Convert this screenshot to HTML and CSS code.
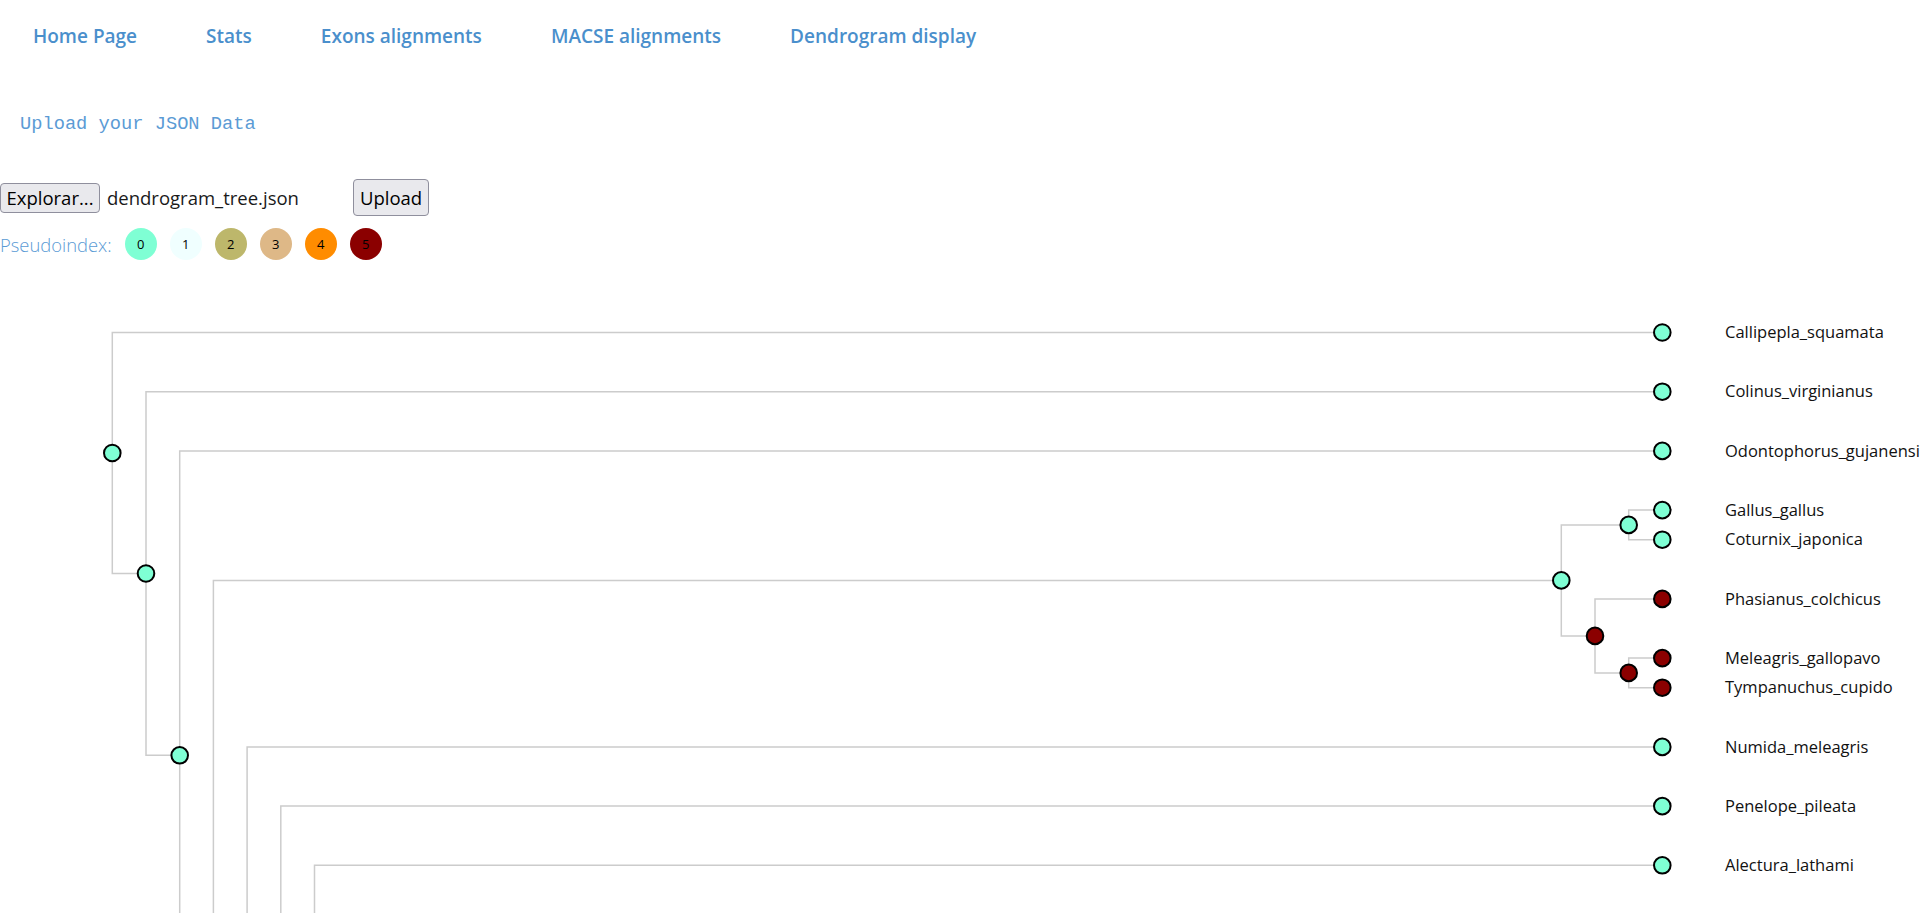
FILE: index.html
```html
<!DOCTYPE html>
<html lang="en">
<head>
<meta charset="utf-8">
<title>Dendrogram display</title>
<link rel="stylesheet" href="styles.css">
</head>
<body>
<nav class="nav">
  <a class="nav-link" href="#">Home Page</a>
  <a class="nav-link" href="#">Stats</a>
  <a class="nav-link" href="#">Exons alignments</a>
  <a class="nav-link" href="#">MACSE alignments</a>
  <a class="nav-link" href="#">Dendrogram display</a>
</nav>

<h3 class="upload-title">Upload your JSON Data</h3>

<form class="upload-form">
  <div class="file-input">
    <button type="button" class="btn btn-browse">Explorar...</button>
    <span class="file-name">dendrogram_tree.json</span>
  </div>
  <button type="button" class="btn btn-upload">Upload</button>
</form>

<div class="legend">
  <span class="legend-label">Pseudoindex:</span>
  <span class="dot dot-0">0</span>
  <span class="dot dot-1">1</span>
  <span class="dot dot-2">2</span>
  <span class="dot dot-3">3</span>
  <span class="dot dot-4">4</span>
  <span class="dot dot-5">5</span>
</div>

<svg class="tree" width="1920" height="653" viewBox="0 0 1920 653">
  <g class="links">
    <path d="M112.3,193 V72.5 H1662.3"/>
    <path d="M112.3,193 V313.5 H146"/>
    <path d="M146,313.5 V131.7 H1662.3"/>
    <path d="M146,313.5 V495.3 H179.7"/>
    <path d="M179.7,495.3 V190.9 H1662.3"/>
    <path d="M179.7,495.3 V800 H213.4"/>
    <path d="M213.4,800 V320.4 H1561.3"/>
    <path d="M247.1,1000 V486.9 H1662.3"/>
    <path d="M280.8,1000 V546.1 H1662.3"/>
    <path d="M314.5,1000 V605.3 H1662.3"/>
    <path d="M1561.3,320.4 V264.9 H1628.7"/>
    <path d="M1561.3,320.4 V375.9 H1595"/>
    <path d="M1628.7,264.9 V250.1 H1662.3"/>
    <path d="M1628.7,264.9 V279.7 H1662.3"/>
    <path d="M1595,375.9 V338.9 H1662.3"/>
    <path d="M1595,375.9 V412.9 H1628.7"/>
    <path d="M1628.7,412.9 V398.1 H1662.3"/>
    <path d="M1628.7,412.9 V427.7 H1662.3"/>
  </g>
  <g class="nodes">
    <circle class="n0" cx="112.3" cy="193" r="8.3"/>
    <circle class="n0" cx="146" cy="313.5" r="8.3"/>
    <circle class="n0" cx="179.7" cy="495.3" r="8.3"/>
    <circle class="n0" cx="1561.3" cy="320.4" r="8.3"/>
    <circle class="n0" cx="1628.7" cy="264.9" r="8.3"/>
    <circle class="n5" cx="1595" cy="375.9" r="8.3"/>
    <circle class="n5" cx="1628.7" cy="412.9" r="8.3"/>

    <circle class="n0" cx="1662.3" cy="72.5" r="8.3"/>
    <circle class="n0" cx="1662.3" cy="131.7" r="8.3"/>
    <circle class="n0" cx="1662.3" cy="190.9" r="8.3"/>
    <circle class="n0" cx="1662.3" cy="250.1" r="8.3"/>
    <circle class="n0" cx="1662.3" cy="279.7" r="8.3"/>
    <circle class="n5" cx="1662.3" cy="338.9" r="8.3"/>
    <circle class="n5" cx="1662.3" cy="398.1" r="8.3"/>
    <circle class="n5" cx="1662.3" cy="427.7" r="8.3"/>
    <circle class="n0" cx="1662.3" cy="486.9" r="8.3"/>
    <circle class="n0" cx="1662.3" cy="546.1" r="8.3"/>
    <circle class="n0" cx="1662.3" cy="605.3" r="8.3"/>
  </g>
  <g class="labels">
    <text x="1725" y="72.5" dy=".35em">Callipepla_squamata</text>
    <text x="1725" y="131.7" dy=".35em">Colinus_virginianus</text>
    <text x="1725" y="190.9" dy=".35em">Odontophorus_gujanensis</text>
    <text x="1725" y="250.1" dy=".35em">Gallus_gallus</text>
    <text x="1725" y="279.7" dy=".35em">Coturnix_japonica</text>
    <text x="1725" y="338.9" dy=".35em">Phasianus_colchicus</text>
    <text x="1725" y="398.1" dy=".35em">Meleagris_gallopavo</text>
    <text x="1725" y="427.7" dy=".35em">Tympanuchus_cupido</text>
    <text x="1725" y="486.9" dy=".35em">Numida_meleagris</text>
    <text x="1725" y="546.1" dy=".35em">Penelope_pileata</text>
    <text x="1725" y="605.3" dy=".35em">Alectura_lathami</text>
  </g>
</svg>
</body>
</html>
```

FILE: styles.css
```css
html, body {
  margin: 0;
  padding: 0;
  overflow: hidden;
  background: #ffffff;
}

body {
  font-family: "Open Sans", "Noto Sans", sans-serif;
  color: #111111;
}

.nav {
  display: flex;
  align-items: center;
  height: 72px;
  padding-left: 33px;
  gap: 69px;
}

.nav-link {
  font-family: "Open Sans", sans-serif;
  font-weight: 600;
  font-size: 19px;
  color: #4a8fcc;
  text-decoration: none;
  line-height: 24px;
}

.upload-title {
  margin: 40px 0 0 20px;
  font-family: "Liberation Mono", "Courier New", monospace;
  font-weight: normal;
  font-size: 18.72px;
  line-height: 24px;
  color: #5b9bd5;
}

.upload-form {
  display: flex;
  align-items: center;
  margin: 43px 0 0 0;
  height: 37px;
}

.file-input {
  display: flex;
  align-items: center;
  width: 353px;
}

.btn {
  font-family: "Open Sans", sans-serif;
  font-size: 18.5px;
  color: #000000;
  background: #e9e9ed;
  border: 1px solid #8f8f9d;
  border-radius: 4px;
  margin: 0;
  box-sizing: border-box;
  display: flex;
  align-items: center;
  justify-content: center;
}

.btn-browse {
  width: 100px;
  height: 30px;
  padding: 0 6px;
}

.btn-upload {
  width: 76px;
  height: 37px;
  padding: 0 6px;
}

.file-name {
  margin-left: 7px;
  font-size: 18.5px;
  color: #1a1a1a;
}

.legend {
  display: flex;
  align-items: center;
  gap: 13px;
  margin-top: 12px;
  height: 32px;
}

.legend-label {
  font-weight: 300;
  font-size: 18.4px;
  color: #5b9bd5;
}

.dot {
  width: 32px;
  height: 32px;
  border-radius: 50%;
  display: flex;
  align-items: center;
  justify-content: center;
  font-size: 13px;
  color: #000000;
}

.dot-0 { background: #7fffd4; }
.dot-1 { background: #f0ffff; }
.dot-2 { background: #bdb76b; }
.dot-3 { background: #deb887; }
.dot-4 { background: #ff8c00; }
.dot-5 { background: #8b0000; }

.tree {
  display: block;
}

.links path {
  fill: none;
  stroke: #cccccc;
  stroke-width: 1.5px;
}

.nodes circle {
  stroke: #000000;
  stroke-width: 2px;
}

.nodes .n0 { fill: #7fffd4; }
.nodes .n5 { fill: #8b0000; }

.labels text {
  font-family: "Open Sans", sans-serif;
  font-size: 16.5px;
  fill: #111111;
}
```
